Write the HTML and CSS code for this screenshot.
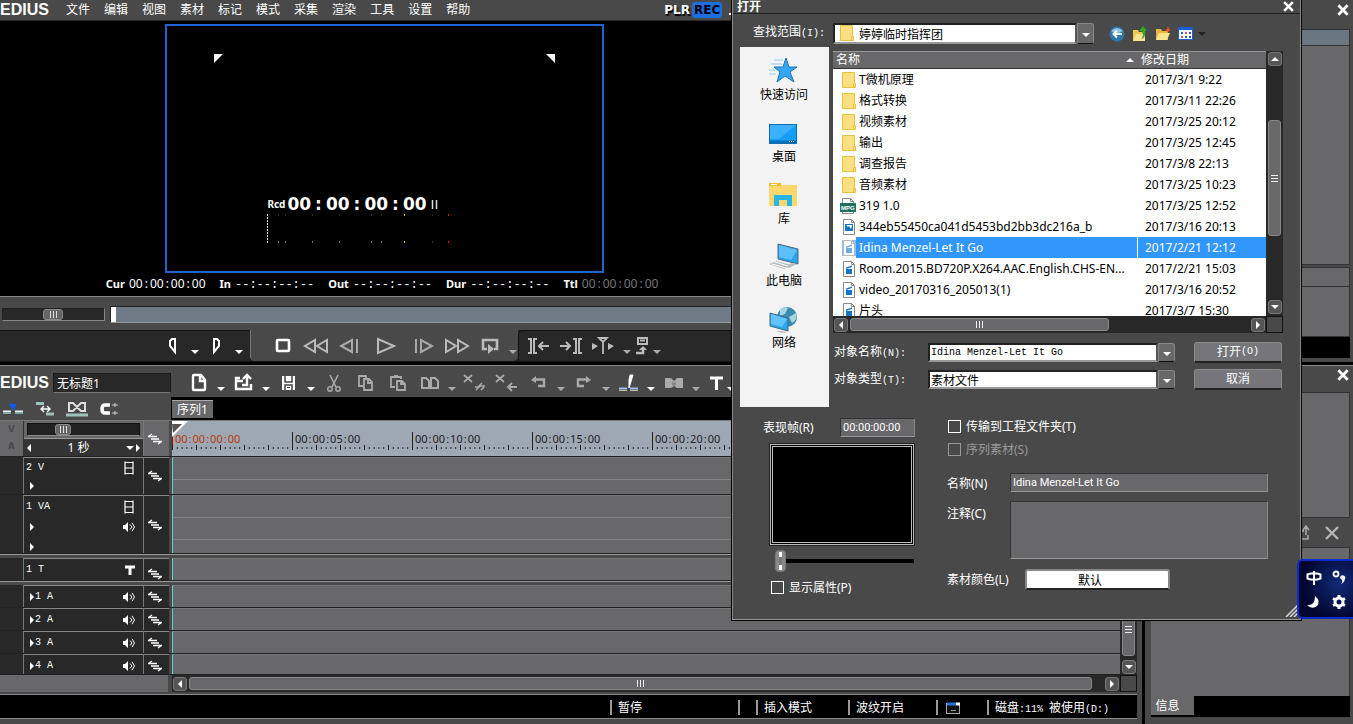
FILE: index.html
```html
<!DOCTYPE html>
<html lang="zh-CN">

<head>
    <meta charset="UTF-8">
    <meta name="viewport" content="width=device-width, initial-scale=1.0">
    <link rel="stylesheet" href="styles.css">
    <title>EDIUS</title>
</head>

<body>
    <!-- Shared icons -->
    <svg class="defs" aria-hidden="true">
        <symbol id="down" viewBox="0 0 10 6"><path d="M1 1h8L5 5z" fill="currentColor"/></symbol>
        <symbol id="right" viewBox="0 0 6 10"><path d="M1 1v8l4-4z" fill="currentColor"/></symbol>
        <symbol id="left" viewBox="0 0 6 10"><path d="M5 1v8L1 5z" fill="currentColor"/></symbol>
        <symbol id="up" viewBox="0 0 10 6"><path d="M1 5h8L5 1z" fill="currentColor"/></symbol>
        <symbol id="close" viewBox="0 0 12 12"><path d="M2 2l8 8M10 2l-8 8" stroke="currentColor" stroke-width="2.4"/></symbol>
        <symbol id="sync" viewBox="0 0 14 12"><path d="M0 3.500h9M3 6h8M5 8.500h9M4 1L.5 3.500M10 11l3.500-2.500" stroke="currentColor" fill="none" stroke-width="1.300"/></symbol>
        <symbol id="film" viewBox="0 0 12 14"><path d="M2 .5v13M10 .5v13M2 1.500h8M2 7h8M2 12.500h8" stroke="currentColor" stroke-width="1.200" fill="none"/></symbol>
        <symbol id="speaker" viewBox="0 0 12 10"><path d="M0 3h2l3-3v10L2 7H0z" fill="currentColor"/><path d="M7 2.500L9 5 7 7.500M9 .8L11.500 5 9 9.200" stroke="currentColor" fill="none"/></symbol>
        <symbol id="folder" viewBox="0 0 14 16"><path d="M.5.5h12v11h1v4H.5z" fill="#fbdf81" stroke="#e9c13c"/><path d="M11.500 11.500v4" stroke="#e9c13c"/></symbol>
        <symbol id="film-file" viewBox="0 0 14 16"><path d="M1.500.5h8l3 3v12h-11z" fill="#fff" stroke="#8a8a8a"/><path d="M9.500.5v3h3" fill="none" stroke="#8a8a8a"/><path d="M4 8h6v5H4zM4 6.500l6-2v1.500L4 8z" fill="#1474c9"/></symbol>
        <symbol id="image-file" viewBox="0 0 14 16"><path d="M1.500.5h8l3 3v12h-11z" fill="#fff" stroke="#8a8a8a"/><path d="M9.500.5v3h3" fill="none" stroke="#8a8a8a"/><path d="M3 5h8v7H3z" fill="#1474c9"/><path d="M4 6l2 2 1-1 2 3 1-3v-1H4z" fill="#fff"/></symbol>
    </svg>

    <div class="top-row">
        <!-- Player -->
        <div class="player">
            <div class="menubar">
                <span class="logo">EDIUS</span>
                <nav class="menu">
                    <a href="#">文件</a><a href="#">编辑</a><a href="#">视图</a><a href="#">素材</a><a href="#">标记</a><a href="#">模式</a><a href="#">采集</a><a href="#">渲染</a><a href="#">工具</a><a href="#">设置</a><a href="#">帮助</a>
                </nav>
                <div class="mode"><span class="plr">PLR</span><span class="rec">REC</span></div>
                <span class="minimize"></span>
            </div>
            <div class="monitor-area">
                <div class="monitor">
                    <div class="corners">
                        <svg width="9" height="9"><path d="M0 0h9L0 9z" fill="#fff"/></svg>
                        <svg width="9" height="9"><path d="M0 0h9v9z" fill="#fff"/></svg>
                    </div>
                    <div class="recording">
                        <div class="rec-line"><span class="rcd">Rcd</span><span class="big-tc">00<i>:</i>00<i>:</i>00<i>:</i>00</span><svg width="8" height="9"><path d="M1.500 0v9M5.500 0v9" stroke="#ddd" stroke-width="1.500"/></svg></div>
                        <svg class="levels" width="190" height="30">
                            <path d="M.5 0v29" stroke="#d8ecdd" stroke-dasharray="2 1"/>
                            <path d="M11 1h1M18 1h1M45 1h1M72 1h1M104 1h1M114 1h1" stroke="#555"/>
                            <path d="M11 28h1M18 28h1M45 28h1M72 28h1M104 28h1M114 28h1" stroke="#cfe8d6"/>
                            <path d="M137 1h1M137 28h1" stroke="#cc0" stroke-width="2"/>
                            <path d="M165 1h1M165 28h1" stroke="#7a5b20"/>
                            <path d="M181 1h1M181 28h1" stroke="#f00" stroke-width="2"/>
                        </svg>
                    </div>
                </div>
                <div class="timecodes">
                    <span><b>Cur</b><span class="tc">00<i>:</i>00<i>:</i>00<i>:</i>00</span></span>
                    <span><b>In</b><span class="dashes">--:--:--:--</span></span>
                    <span><b>Out</b><span class="dashes">--:--:--:--</span></span>
                    <span><b>Dur</b><span class="dashes">--:--:--:--</span></span>
                    <span class="total"><b>Ttl</b><span class="tc">00<i>:</i>00<i>:</i>00<i>:</i>00</span></span>
                </div>
            </div>
            <div class="seek">
                <div class="shuttle"><span class="grip"></span></div>
                <div class="position"><span class="cursor"></span></div>
            </div>
            <div class="transport">
                <div class="marks">
                    <button aria-label="设置入点"><svg width="12" height="20"><path d="M8 3v13L3 10V5l2-2z" fill="none" stroke="#fff" stroke-width="2"/></svg></button>
                    <button class="drop" aria-label="入点菜单"><svg><use href="#down"/></svg></button>
                    <button aria-label="设置出点"><svg width="12" height="20"><path d="M3 3v13l5-6V5L6 3z" fill="none" stroke="#fff" stroke-width="2"/></svg></button>
                    <button class="drop" aria-label="出点菜单"><svg><use href="#down"/></svg></button>
                </div>
                <div class="play-buttons">
                    <button aria-label="停止"><svg width="16" height="16"><rect x="2" y="2" width="12" height="11" rx="1" fill="none" stroke="#fff" stroke-width="2.600"/></svg></button>
                    <button aria-label="快退"><svg width="26" height="16"><path d="M12 2v12L2 8zM24 2v12L14 8z" fill="none" stroke="#bbb" stroke-width="2"/></svg></button>
                    <button aria-label="上一帧"><svg width="20" height="16"><path d="M13 2v12L2 8zM18 1v14" fill="none" stroke="#aaa" stroke-width="2"/></svg></button>
                    <button class="play" aria-label="播放"><svg width="22" height="18"><path d="M3 2v14l16-7z" fill="none" stroke="#bbb" stroke-width="2"/></svg></button>
                    <button aria-label="下一帧"><svg width="20" height="16"><path d="M7 2v12l11-6zM2 1v14" fill="none" stroke="#aaa" stroke-width="2"/></svg></button>
                    <button aria-label="快进"><svg width="26" height="16"><path d="M2 2v12l10-6zM14 2v12l10-6z" fill="none" stroke="#bbb" stroke-width="2"/></svg></button>
                    <button aria-label="循环"><svg width="20" height="18"><path d="M7 12H3V3h14v9h-3" fill="none" stroke="#bbb" stroke-width="2.600"/><path d="M8 7v10l6-5z" fill="#bbb"/></svg></button>
                    <button class="drop dim" aria-label="循环菜单"><svg><use href="#down"/></svg></button>
                </div>
                <div class="edit-buttons">
                    <button aria-label="转到入点"><svg width="24" height="18"><path d="M1 2h3v14H1M10 2H7v14h3M22 9h-9M16 5l-4 4 4 4" fill="none" stroke="#bbb" stroke-width="2"/></svg></button>
                    <button aria-label="转到出点"><svg width="24" height="18"><path d="M14 2h3v14h-3M23 2h-3v14h3M1 9h9M7 5l4 4-4 4" fill="none" stroke="#bbb" stroke-width="2"/></svg></button>
                    <button aria-label="播放剪辑点"><svg width="24" height="18"><path d="M1 6v7l6-4zM17 6v7l6-4z" fill="#bbb"/><path d="M12 17V5M8 1l4 4 4-4z" fill="none" stroke="#bbb" stroke-width="1.800"/></svg></button>
                    <button class="drop dim" aria-label="剪辑点菜单"><svg><use href="#down"/></svg></button>
                    <button class="narrow" aria-label="输出"><svg width="14" height="20"><path d="M3 2h9v6H3zM5 4.500h5" fill="none" stroke="#bbb" stroke-width="2"/><path d="M1 17h7v-5" fill="none" stroke="#bbb" stroke-width="2.500"/><path d="M4 14l4-4 4 4z" fill="#bbb"/></svg></button>
                    <button class="drop dim narrow" aria-label="输出菜单"><svg><use href="#down"/></svg></button>
                </div>
            </div>
        </div>

        <!-- Bin window -->
        <div class="bin">
            <div class="bin-title"><button aria-label="关闭素材库"><svg width="14" height="14"><use href="#close"/></svg></button></div>
            <div class="bin-bar"></div>
            <div class="bin-list"></div>
            <div class="bin-detail"></div>
            <div class="bin-footer"></div>
        </div>
    </div>

    <div class="bottom-row">
        <!-- Timeline window -->
        <div class="timeline">
            <div class="toolbar">
                <span class="logo">EDIUS</span>
                <input class="project-name" type="text" value="无标题1" aria-label="工程名称">
                <div class="tools">
                    <button aria-label="新建"><svg width="18" height="20"><path d="M4 2h7l4 5v9q0 1-1 1H4q-1 0-1-1V3q0-1 1-1zM10 3v5h5" fill="none" stroke="#fff" stroke-width="2.400"/></svg></button>
                    <button class="drop" aria-label="新建菜单"><svg><use href="#down"/></svg></button>
                    <button aria-label="打开工程"><svg width="20" height="20"><path d="M9 8H2v8h15v-5M2 8V5h4M8 12h5V4M9 6l4-4 4 4" fill="none" stroke="#fff" stroke-width="2.400"/></svg></button>
                    <button class="drop" aria-label="打开菜单"><svg><use href="#down"/></svg></button>
                    <button aria-label="保存"><svg width="16" height="18"><path d="M1 2h13v14H1z" fill="#fff"/><path d="M4 2v6h7V2M4 16v-5h7v5" fill="none" stroke="#444" stroke-width="1.500"/><path d="M6 13.500h3" stroke="#444"/></svg></button>
                    <button class="drop" aria-label="保存菜单"><svg><use href="#down"/></svg></button>
                    <button class="spaced" aria-label="剪切"><svg width="16" height="20"><path d="M4 2l6 12M12 2L6 14" stroke="#aaa" stroke-width="1.600"/><circle cx="4" cy="16" r="2.200" fill="none" stroke="#aaa" stroke-width="1.500"/><circle cx="12" cy="16" r="2.200" fill="none" stroke="#aaa" stroke-width="1.500"/></svg></button>
                    <button class="spaced" aria-label="复制"><svg width="18" height="20"><path d="M6 13H2V3h7v3M7 6h5l3 3v8H7zM11 6v4h4" fill="none" stroke="#aaa" stroke-width="1.800"/></svg></button>
                    <button class="spaced" aria-label="粘贴"><svg width="18" height="20"><path d="M6 14H2V4h10v2M5 3h4M8 8h5l3 3v6H8zM12 8v3h3" fill="none" stroke="#aaa" stroke-width="1.800"/></svg></button>
                    <button aria-label="替换"><svg width="20" height="16"><path d="M2 3h4l3 3v7H2zM11 3h4l3 3v7h-7z" fill="none" stroke="#aaa" stroke-width="2"/></svg></button>
                    <button class="drop dim" aria-label="替换菜单"><svg><use href="#down"/></svg></button>
                    <button class="spaced" aria-label="删除参数"><svg width="23" height="20"><path d="M1 2l8 7M9 2L1 9M13 17l4-4h5M12 14h3l4-4M18 17l3-3" fill="none" stroke="#aaa" stroke-width="1.700"/></svg></button>
                    <button class="spaced" aria-label="波纹删除"><svg width="23" height="20"><path d="M1 2l8 7M9 2L1 9M22 14h-8M17 10l-4 4 4 4" fill="none" stroke="#aaa" stroke-width="1.800"/></svg></button>
                    <button aria-label="撤销"><svg width="18" height="16"><path d="M6 1v7L1 5z" fill="#aaa"/><path d="M4 4.500h10V11H8" fill="none" stroke="#aaa" stroke-width="2.400"/></svg></button>
                    <button class="drop dim" aria-label="撤销菜单"><svg><use href="#down"/></svg></button>
                    <button aria-label="恢复"><svg width="18" height="16"><path d="M11 1v7l5-3z" fill="#aaa"/><path d="M13 4.500H3V11h6" fill="none" stroke="#aaa" stroke-width="2.400"/></svg></button>
                    <button class="drop dim" aria-label="恢复菜单"><svg><use href="#down"/></svg></button>
                    <button aria-label="添加剪切点"><svg width="20" height="18"><path d="M14 1l-4 13V6l1-5z" fill="#fff" stroke="#fff"/><path d="M0 14.500h8M11 14.500h8" stroke="#9cc3ee" stroke-width="2"/><path d="M0 16.500h8M11 16.500h8" stroke="#c9b99c"/></svg></button>
                    <button class="drop" aria-label="剪切点菜单"><svg><use href="#down"/></svg></button>
                    <button aria-label="添加转场"><svg width="20" height="14"><path d="M1 2h6l3 3 3-3h6v10h-6l-3-2-3 2H1z" fill="#aaa"/><path d="M8 5v4l2 1 2-1V5l-2 2z" fill="#888"/></svg></button>
                    <button class="drop dim" aria-label="转场菜单"><svg><use href="#down"/></svg></button>
                    <button class="text-tool" aria-label="创建字幕"><svg width="16" height="16"><path d="M1 3h13M7.500 3v12" stroke="#fff" stroke-width="3"/></svg></button>
                    <button class="drop" aria-label="字幕菜单"><svg><use href="#down"/></svg></button>
                </div>
            </div>

            <div class="tabs-row">
                <div class="toggles">
                    <button aria-label="插入模式"><svg width="20" height="14"><path d="M0 10h8M12 10h8" stroke="#eee" stroke-width="3"/><path d="M0 11h8M12 11h8" stroke="#7fa6a8" stroke-width="2"/><path d="M6 2h8l-4 7z" fill="#0a5cf5"/></svg></button>
                    <button aria-label="波纹模式"><svg width="18" height="14"><path d="M0 1.500h8M10 12h8" stroke="#9fc0bb" stroke-width="3"/><path d="M5 7h9M8 4L5 7l3 3M11 4l3 3-3 3" fill="none" stroke="#fff" stroke-width="1.400"/></svg></button>
                    <button aria-label="组模式"><svg width="22" height="16"><path d="M3 2h4l8 8h4V2h-4L7 10H3z" fill="none" stroke="#ddd" stroke-width="2"/><path d="M0 14h22" stroke="#9fc0bb" stroke-width="3"/></svg></button>
                    <button aria-label="吸附"><svg width="19" height="14"><path d="M10 3H5Q2 3 2 7t3 4h5" fill="none" stroke="#fff" stroke-width="3.500"/><path d="M12 3h6M12 11h6M15 1v4M15 9v4" stroke="#ccc"/></svg></button>
                </div>
                <div class="tabs"><button class="tab">序列1</button></div>
            </div>

            <div class="scale-row">
                <div class="va"><span>V</span><span>A</span></div>
                <div class="scale">
                    <div class="scale-slider"><span class="grip"></span></div>
                    <div class="scale-value"><svg width="6" height="10"><use href="#left"/></svg><span>1 秒</span><svg width="10" height="6"><use href="#down"/></svg><svg width="6" height="10"><use href="#right"/></svg></div>
                </div>
                <div class="sync-all"><svg width="14" height="12"><use href="#sync"/></svg></div>
                <div class="ruler">
                    <svg class="playhead" width="16" height="16"><path d="M0 0h16L0 16z" fill="#fff"/><path d="M0 3h10L1 12z" fill="#555"/></svg>
                    <div class="marks-row">
                        <span class="tc now">00<i>:</i>00<i>:</i>00<i>:</i>00</span>
                        <span class="tc">00<i>:</i>00<i>:</i>05<i>:</i>00</span>
                        <span class="tc">00<i>:</i>00<i>:</i>10<i>:</i>00</span>
                        <span class="tc">00<i>:</i>00<i>:</i>15<i>:</i>00</span>
                        <span class="tc">00<i>:</i>00<i>:</i>20<i>:</i>00</span>
                    </div>
                    <svg class="ticks" width="100%" height="5">
                        <defs><pattern id="tick" width="24" height="5" patternUnits="userSpaceOnUse"><path d="M.5 0v5M5.300 2v2M10.100 2v2M14.900 2v2M19.700 2v2" stroke="#222"/></pattern></defs>
                        <rect width="100%" height="5" fill="url(#tick)"/>
                    </svg>
                </div>
            </div>

            <div class="tracks-area">
                <div class="tracks">
                    <div class="track video">
                        <div class="patch"></div>
                        <div class="head"><div class="head-line"><span>2 V</span><svg width="12" height="14"><use href="#film"/></svg></div><div class="head-line"><svg width="6" height="10"><use href="#right"/></svg></div></div>
                        <div class="sync"><svg width="14" height="12"><use href="#sync"/></svg></div>
                        <div class="lane"><div class="sub"></div><div class="sub small"></div></div>
                    </div>
                    <div class="track video-audio">
                        <div class="patch"></div>
                        <div class="head"><div class="head-line"><span>1 VA</span><svg width="12" height="14"><use href="#film"/></svg></div><div class="head-line"><svg width="6" height="10"><use href="#right"/></svg><svg width="12" height="10"><use href="#speaker"/></svg></div><div class="head-line"><svg width="6" height="10"><use href="#right"/></svg></div></div>
                        <div class="sync"><svg width="14" height="12"><use href="#sync"/></svg></div>
                        <div class="lane"><div class="sub"></div><div class="sub"></div><div class="sub small"></div></div>
                    </div>
                    <div class="split"></div>
                    <div class="track title">
                        <div class="patch"></div>
                        <div class="head"><div class="head-line"><span>1 T</span><svg width="10" height="10"><path d="M0 2h10M5 2v8" stroke="#fff" stroke-width="3"/></svg></div></div>
                        <div class="sync"><svg width="14" height="12"><use href="#sync"/></svg></div>
                        <div class="lane"></div>
                    </div>
                    <div class="split"></div>
                    <div class="track audio">
                        <div class="patch"></div>
                        <div class="head"><div class="head-line"><svg width="6" height="10"><use href="#right"/></svg><span>1 A</span><svg width="12" height="10"><use href="#speaker"/></svg></div></div>
                        <div class="sync"><svg width="14" height="12"><use href="#sync"/></svg></div>
                        <div class="lane"></div>
                    </div>
                    <div class="track audio">
                        <div class="patch"></div>
                        <div class="head"><div class="head-line"><svg width="6" height="10"><use href="#right"/></svg><span>2 A</span><svg width="12" height="10"><use href="#speaker"/></svg></div></div>
                        <div class="sync"><svg width="14" height="12"><use href="#sync"/></svg></div>
                        <div class="lane"></div>
                    </div>
                    <div class="track audio">
                        <div class="patch"></div>
                        <div class="head"><div class="head-line"><svg width="6" height="10"><use href="#right"/></svg><span>3 A</span><svg width="12" height="10"><use href="#speaker"/></svg></div></div>
                        <div class="sync"><svg width="14" height="12"><use href="#sync"/></svg></div>
                        <div class="lane"></div>
                    </div>
                    <div class="track audio">
                        <div class="patch"></div>
                        <div class="head"><div class="head-line"><svg width="6" height="10"><use href="#right"/></svg><span>4 A</span><svg width="12" height="10"><use href="#speaker"/></svg></div></div>
                        <div class="sync"><svg width="14" height="12"><use href="#sync"/></svg></div>
                        <div class="lane"></div>
                    </div>
                </div>
                <div class="vscroll">
                    <div class="thumb"><span class="lines"></span></div>
                    <button aria-label="向下滚动"><svg width="10" height="6"><use href="#down"/></svg></button>
                </div>
            </div>

            <div class="hscroll-row">
                <div class="hscroll">
                    <button aria-label="向左滚动"><svg width="6" height="10"><use href="#left"/></svg></button>
                    <div class="thumb"><span class="bars"></span></div>
                    <button aria-label="向右滚动"><svg width="6" height="10"><use href="#right"/></svg></button>
                </div>
                <div class="scroll-corner"></div>
            </div>

            <div class="statusbar">
                <div class="st-state">暂停</div>
                <div class="st-empty"></div>
                <div class="st-mode">插入模式</div>
                <div class="st-ripple">波纹开启</div>
                <div class="st-icon"><svg width="15" height="12"><rect x=".5" y="1.500" width="13" height="10" fill="#111" stroke="#aaa"/><path d="M1 2h9" stroke="#2272e6" stroke-width="3"/><path d="M10 2h4" stroke="#fff" stroke-width="3"/><path d="M5 8.500h5" stroke="#999"/></svg></div>
                <div class="st-disk">磁盘<span class="mono">:11% </span>被使用<span class="mono">(D:)</span></div>
            </div>
        </div>

        <!-- Information palette -->
        <div class="info">
            <div class="info-title"><button aria-label="关闭信息"><svg width="14" height="14"><use href="#close"/></svg></button></div>
            <div class="info-top"></div>
            <div class="info-tools">
                <svg width="12" height="16"><path d="M5 6H1v8h8v-4M7 10V2M4 5l3-4 3 4" fill="none" stroke="#aaa" stroke-width="1.500"/></svg>
                <button aria-label="删除"><svg width="16" height="16"><path d="M2 2l12 12M14 2L2 14" stroke="#b5b5b5" stroke-width="2.400"/></svg></button>
            </div>
            <div class="info-body"></div>
            <div class="info-tabs"><button>信息</button></div>
        </div>
    </div>

    <!-- Open file dialog -->
    <div class="dialog" role="dialog" aria-label="打开">
        <div class="dialog-title"><b>打开</b><button aria-label="关闭"><svg width="13" height="13"><use href="#close"/></svg></button></div>

        <div class="lookin">
            <label for="lookin">查找范围<span class="mono">(I):</span></label>
            <div class="combo">
                <div class="combo-field"><svg width="14" height="16"><use href="#folder"/></svg><select id="lookin"><option>婷婷临时指挥团</option></select></div>
                <span class="combo-arrow"><svg width="10" height="6"><use href="#down"/></svg></span>
            </div>
            <div class="nav-icons">
                <button aria-label="后退"><svg width="16" height="16"><circle cx="8" cy="8" r="7.500" fill="#2c77ae"/><path d="M2 5q6-6 12 0-6 4-12 0z" fill="#8ec4e4"/><path d="M13 8H5M8 4.500L4.500 8 8 11.500" fill="none" stroke="#fff" stroke-width="2"/></svg></button>
                <button aria-label="上一级"><svg width="16" height="16"><path d="M1 4h5l1 2h6v9H1z" fill="#f0ca54"/><path d="M1 15l3-7h9v7z" fill="#fbe490"/><path d="M9 13q3-2 1-8H7l4-5 4 5h-2q1 7-4 8z" fill="#3ba822"/></svg></button>
                <button aria-label="新建文件夹"><svg width="16" height="16"><path d="M1 3h5l1 2h6v9H1z" fill="#e8b83d"/><path d="M1 14l3-7h11l-3 7z" fill="#fce391"/><path d="M13 0l1 3 2 1-2 1-1 2-1-2-2-1 2-1z" fill="#f4501c"/></svg></button>
                <button aria-label="查看"><svg width="16" height="16"><rect x=".5" y="1.500" width="14" height="12" fill="#fff" stroke="#1560d4"/><path d="M0 2.500h15" stroke="#1560d4" stroke-width="3"/><path d="M3 6h2v2H3zM7 10h2v2H7z" fill="#1560d4"/><path d="M7 6h2v2H7zM3 10h2v2H3z" fill="#c2576b"/><path d="M11 6h2v2h-2zM11 10h2v2h-2z" fill="#31549c"/></svg></button>
                <svg class="view-arrow" width="10" height="6"><use href="#down"/></svg>
            </div>
        </div>

        <div class="browser">
            <div class="places">
                <a href="#"><svg width="32" height="28"><path d="M18 1l3 9h8l-7 5 4 10-9-6-8 6 3-10-6-5h9z" fill="#35a6f3" stroke="#1778b8"/><path d="M6 3h9M3 7h11M1 13h6M1 17h7" stroke="#94cdf3"/></svg>快速访问</a>
                <a href="#"><svg width="32" height="28"><rect x="1.500" y="5.500" width="27" height="19" fill="#169df8" stroke="#0c70b6"/><path d="M2 23h26" stroke="#0c70b6" stroke-width="3"/><path d="M21 22.500h6" stroke="#fff" stroke-dasharray="1 1"/><path d="M2 6h26L11 20H2z" fill="#3dafff"/></svg>桌面</a>
                <a href="#"><svg width="32" height="28"><path d="M1 2h12v2h16v21H1z" fill="#fbd86d"/><path d="M1 2h12v3H1z" fill="#eebc2e"/><path d="M3 3h6v1H3z" fill="#fff"/><path d="M6 25V14h18v11h-5v-6h-8v6z" fill="#28b6e8"/></svg>库</a>
                <a href="#"><svg width="34" height="30"><path d="M11 1l20 5v15l-20-5z" fill="#27a3f0" stroke="#4d6b78"/><path d="M12 2l18 5-6 10-12-3z" fill="#5dc0fb"/><path d="M25 20l5 1-8 4-4-2zM2 21l8-3 14 4-7 4z" fill="#b6bec3"/><path d="M5 21l14 4M8 19l13 4" stroke="#fff"/></svg>此电脑</a>
                <a href="#"><svg width="34" height="30"><circle cx="20" cy="12" r="10" fill="#388bb1"/><path d="M13 5q5-4 8-2l-3 6-5 2zM22 12l7-4q2 7-4 10z" fill="#a8d7df"/><path d="M3 8l18 5v13L3 21z" fill="#29a6f1" stroke="#486a7c"/><path d="M4 9l16 5-5 8-11-3z" fill="#61c4ff"/><path d="M9 26h5l6 1-5 1z" fill="#b6bec3"/></svg>网络</a>
            </div>

            <div class="file-list">
                <div class="file-main">
                    <div class="file-scroll">
                        <table>
                            <thead>
                                <tr><th class="name-col"><div class="th-inner">名称<svg width="10" height="6"><use href="#up"/></svg></div></th><th>修改日期</th></tr>
                            </thead>
                            <tbody>
                                <tr><td><div class="file"><svg width="14" height="16"><use href="#folder"/></svg><span>T微机原理</span></div></td><td>2017/3/1 9:22</td></tr>
                                <tr><td><div class="file"><svg width="14" height="16"><use href="#folder"/></svg><span>格式转换</span></div></td><td>2017/3/11 22:26</td></tr>
                                <tr><td><div class="file"><svg width="14" height="16"><use href="#folder"/></svg><span>视频素材</span></div></td><td>2017/3/25 20:12</td></tr>
                                <tr><td><div class="file"><svg width="14" height="16"><use href="#folder"/></svg><span>输出</span></div></td><td>2017/3/25 12:45</td></tr>
                                <tr><td><div class="file"><svg width="14" height="16"><use href="#folder"/></svg><span>调查报告</span></div></td><td>2017/3/8 22:13</td></tr>
                                <tr><td><div class="file"><svg width="14" height="16"><use href="#folder"/></svg><span>音频素材</span></div></td><td>2017/3/25 10:23</td></tr>
                                <tr><td><div class="file"><svg class="mpg" width="16" height="16"><path d="M2.500 6V.5h8l3 3V15.500h-11V12" fill="#fff" stroke="#8a8a8a"/><path d="M10.500.5v3h3" fill="none" stroke="#8a8a8a"/><path d="M0 5h16v9H0z" fill="#1d7264"/><text x="1" y="12">MPG</text></svg><span>319 1.0</span></div></td><td>2017/3/25 12:52</td></tr>
                                <tr><td><div class="file"><svg width="14" height="16"><use href="#image-file"/></svg><span>344eb55450ca041d5453bd2bb3dc216a_b</span></div></td><td>2017/3/16 20:13</td></tr>
                                <tr class="selected"><td><div class="file"><svg width="14" height="16"><use href="#film-file"/></svg><span>Idina Menzel-Let It Go</span></div></td><td>2017/2/21 12:12</td></tr>
                                <tr><td><div class="file"><svg width="14" height="16"><use href="#film-file"/></svg><span>Room.2015.BD720P.X264.AAC.English.CHS-EN...</span></div></td><td>2017/2/21 15:03</td></tr>
                                <tr><td><div class="file"><svg width="14" height="16"><use href="#film-file"/></svg><span>video_20170316_205013(1)</span></div></td><td>2017/3/16 20:52</td></tr>
                                <tr><td><div class="file"><svg width="14" height="16"><use href="#film-file"/></svg><span>片头</span></div></td><td>2017/3/7 15:30</td></tr>
                            </tbody>
                        </table>
                    </div>
                    <div class="vscroll">
                        <button aria-label="向上"><svg width="10" height="6"><use href="#up"/></svg></button>
                        <div class="thumb"><span class="lines"></span></div>
                        <button aria-label="向下"><svg width="10" height="6"><use href="#down"/></svg></button>
                    </div>
                </div>
                <div class="hscroll-row">
                    <div class="hscroll">
                        <button aria-label="向左"><svg width="6" height="10"><use href="#left"/></svg></button>
                        <div class="thumb"><span class="bars"></span></div>
                        <button aria-label="向右"><svg width="6" height="10"><use href="#right"/></svg></button>
                    </div>
                    <div class="scroll-corner"></div>
                </div>

                <div class="name-rows">
                    <div class="name-row">
                        <label for="objname">对象名称<span class="mono">(N):</span></label>
                        <div class="combo"><div class="combo-field"><input id="objname" type="text" value="Idina Menzel-Let It Go"></div><span class="combo-arrow"><svg width="10" height="6"><use href="#down"/></svg></span></div>
                        <button class="btn">打开<span class="mono">(O)</span></button>
                    </div>
                    <div class="name-row">
                        <label for="objtype">对象类型<span class="mono">(T):</span></label>
                        <div class="combo"><div class="combo-field"><select id="objtype"><option>素材文件</option></select></div><span class="combo-arrow"><svg width="10" height="6"><use href="#down"/></svg></span></div>
                        <button class="btn">取消</button>
                    </div>
                </div>
            </div>
        </div>

        <div class="properties">
            <div class="preview-col">
                <div class="frame-row"><label for="frame">表现帧(R)</label><input id="frame" class="field" type="text" value="00:00:00:00"></div>
                <div class="preview"></div>
                <input class="frame-slider" type="range" min="0" max="100" value="0" aria-label="表现帧位置">
                <label class="check"><input type="checkbox">显示属性(P)</label>
            </div>
            <div class="clip-col">
                <label class="check"><input type="checkbox">传输到工程文件夹(T)</label>
                <label class="check disabled"><input type="checkbox" disabled>序列素材(S)</label>
                <div class="form-row first"><label for="clipname">名称(N)</label><input id="clipname" class="field" type="text" value="Idina Menzel-Let It Go"></div>
                <div class="form-row comment"><label for="comment">注释(C)</label><textarea id="comment" class="field"></textarea></div>
                <div class="form-row color"><label for="color">素材颜色(L)</label><button id="color" class="color-btn">默认</button></div>
            </div>
        </div>
        <svg class="resize" width="13" height="13"><path d="M1 13L13 1M5 13l8-8M9 13l4-4" stroke="#ddd" stroke-width="1.500"/></svg>
    </div>

    <!-- Input method panel -->
    <div class="ime">
        <svg width="18" height="18"><path d="M2.500 5.500Q9 3 15.500 5.500v4Q9 12 2.500 9.500zM9 2v14" fill="none" stroke="#fff" stroke-width="2"/></svg>
        <svg width="16" height="18"><circle cx="5" cy="5" r="2.500" fill="none" stroke="#fff" stroke-width="1.800"/><path d="M9 8a2.500 2.500 0 1 1 5 2q-1 4-4 5 2-3 1-4-2-1-2-3z" fill="#fff"/></svg>
        <svg width="16" height="16"><path d="M10 2q6 5 2 10-5 4-10-1 8 1 8-9z" fill="#fff"/></svg>
        <svg width="16" height="16"><circle cx="8" cy="8" r="4" fill="none" stroke="#fff" stroke-width="3"/><path d="M8 1v2M8 13v2M2 4.500l2 1M12 10.500l2 1M2 11.500l2-1M12 5.500l2-1" stroke="#fff" stroke-width="3"/></svg>
    </div>
</body>

</html>
```
FILE: styles.css
```css
/* Reset and global styles */
* {
    box-sizing: border-box;
}

body {
    margin: 0;
    height: 100vh;
    min-height: 700px;
    display: flex;
    flex-direction: column;
    overflow: hidden;
    position: relative;
    background-color: #000;
    color: #fff;
    font-family: "Noto Sans", "Noto Sans CJK SC", sans-serif;
    font-size: 12px;
    line-height: 16px;
}

button {
    border: 0;
    padding: 0;
    margin: 0;
    background: none;
    color: inherit;
    font: inherit;
    display: flex;
    align-items: center;
    justify-content: center;
    flex-shrink: 0;
}

a {
    color: inherit;
    text-decoration: none;
}

svg {
    flex-shrink: 0;
    display: block;
}

.defs {
    position: absolute;
    width: 0;
    height: 0;
}

.tc i {
    font-style: normal;
    margin: 0 2px;
}

.mono {
    font-family: "Liberation Mono", monospace;
    font-size: 10px;
    white-space: pre;
}

.top-row {
    display: flex;
    flex: 0 0 362px;
}

.bottom-row {
    display: flex;
    flex: 1;
    min-height: 0;
    margin-top: 3px;
    gap: 3px;
}

.logo {
    width: 51px;
    font: bold 16px/16px "Liberation Sans", sans-serif;
    flex-shrink: 0;
}

/* Player */
.player {
    flex: 0 0 57%;
    display: flex;
    flex-direction: column;
    background-color: #494949;
}

.menubar {
    height: 21px;
    display: flex;
    align-items: center;
    border-bottom: 1px solid #2a2a2a;
}

.menu {
    display: flex;
    gap: 14px;
    margin-left: 15px;
    flex: 1;
    white-space: nowrap;
}

.mode {
    display: flex;
    align-items: center;
    gap: 2px;
    font: bold 12px/16px "DejaVu Sans", sans-serif;
}

.plr {
    text-shadow: 1px 2px 1px #000;
}

.rec {
    background-color: #1b6fdf;
    color: #001;
    border-radius: 3px;
    padding: 0 2px;
}

.minimize {
    width: 10px;
    height: 2px;
    background-color: #fff;
    margin: 8px 32px 0 7px;
}

.monitor-area {
    flex: 1;
    background-color: #000;
    padding: 3px 2px 0 0;
}

.monitor {
    width: 57%;
    height: 249px;
    margin: 0 auto;
    border: 2px solid #1d64d2;
    display: flex;
    flex-direction: column;
}

.corners {
    display: flex;
    justify-content: space-between;
    padding: 28px 47px 0;
}

.recording {
    margin: 131px 0 0 100px;
}

.rec-line {
    display: flex;
    align-items: center;
    height: 20px;
}

.rcd {
    font: bold 10px/16px "Noto Sans", sans-serif;
    margin-right: 2px;
}

.big-tc {
    font: bold 17px/20px "DejaVu Sans", sans-serif;
    margin-right: 4px;
}

.big-tc i {
    font-style: normal;
    margin: 0 4px;
}

.timecodes {
    display: flex;
    justify-content: center;
    gap: 14px;
    padding: 3px 5px 0 0;
}

.timecodes b {
    font-size: 11px;
    margin-right: 4px;
}

.dashes {
    font-family: "Liberation Mono", monospace;
}

.total .tc {
    color: #777;
}

.seek {
    height: 34px;
    border-top: 1px solid #888;
    display: flex;
    align-items: center;
    gap: 5px;
    padding: 2px 39px 0 2px;
}

.shuttle {
    width: 103px;
    height: 13px;
    background-color: #282828;
    border: 1px solid #222;
    border-bottom-color: #888;
    border-right-color: #888;
    padding-left: 40px;
}

.grip {
    display: block;
    width: 20px;
    height: 11px;
    border: 1px solid #888;
    border-radius: 3px;
    background: repeating-linear-gradient(90deg, #ddd 0 1px, #666 1px 3px) center / 7px 7px no-repeat #666;
}

.position {
    flex: 1;
    height: 17px;
    background-color: #6f7a86;
    border: 1px solid #222;
    border-bottom-color: #999;
    border-right: 1px solid #fff;
}

.cursor {
    display: block;
    width: 5px;
    height: 15px;
    background-color: #fff;
}

.transport {
    height: 32px;
    display: flex;
    background-color: #282828;
    border-bottom: 1px solid #111;
}

.marks,
.play-buttons,
.edit-buttons {
    display: flex;
    align-items: center;
    height: 31px;
}

.marks {
    width: 250px;
    border-top: 1px solid #111;
    padding-left: 162px;
}

.transport button {
    width: 22px;
    height: 28px;
}

.transport .drop,
.tools .drop {
    padding-top: 12px;
}

.drop svg {
    width: 10px;
    height: 6px;
}

.dim {
    color: #aaa;
}

.play-buttons {
    width: 268px;
    background-color: #494949;
    border-left: 1px solid #777;
    border-radius: 0 0 5px 5px;
    padding-left: 15px;
}

.play-buttons button {
    width: 32px;
}

.transport .play-buttons button {
    width: 33px;
}

.transport .play-buttons .play {
    width: 42px;
}

.transport .play-buttons .drop {
    width: 13px;
}

.edit-buttons {
    flex: 1;
    border-top: 1px solid #111;
    border-left: 1px solid #111;
    border-radius: 5px 0 0 0;
    padding-left: 4px;
}

.transport .edit-buttons button {
    width: 32px;
}

.transport .edit-buttons .drop,
.transport .edit-buttons .narrow {
    width: 15px;
}

/* Bin window */
.bin {
    flex: 1;
    display: flex;
    flex-direction: column;
    padding-right: 3px;
    background-color: #494949;
}

.bin-title {
    height: 29px;
    display: flex;
    justify-content: flex-end;
    align-items: flex-start;
    padding: 3px 0 0;
}

.bin-bar {
    height: 17px;
    background-color: #6b7683;
    border: 1px solid #333;
}

.bin-list {
    height: 219px;
    background-color: #68686a;
    border-right: 1px solid #333;
    border-bottom: 1px solid #333;
}

.bin-detail {
    height: 70px;
    margin-top: 2px;
    background: linear-gradient(#333, #333) 0 18px / 100% 1px no-repeat #68686a;
    border: 1px solid #333;
}

.bin-footer {
    height: 21px;
    background-color: #000;
}

/* Timeline window */
.timeline {
    flex: 1;
    min-width: 0;
    display: flex;
    flex-direction: column;
    background-color: #494949;
    border-top: 1px solid #888;
}

.toolbar {
    height: 31px;
    display: flex;
    align-items: center;
    padding-top: 3px;
    overflow: hidden;
}

.project-name {
    width: 118px;
    height: 20px;
    margin-left: 2px;
    padding: 2px 3px;
    background-color: #282828;
    border: 1px solid #1a1a1a;
    border-bottom-color: #777;
    color: #fff;
    font: inherit;
}

.tools {
    display: flex;
    align-items: center;
    margin-left: 16px;
}

.tools button {
    width: 23px;
    height: 26px;
}

.tools .drop {
    width: 22px;
}

.tools .spaced {
    margin-right: 9px;
}

.tools .text-tool {
    width: 16px;
    margin-left: 2px;
}

.tools .text-tool + .drop {
    width: 12px;
}

.tabs-row {
    height: 24px;
    display: flex;
    border-bottom: 1px solid #777;
}

.toggles {
    width: 171px;
    display: flex;
    gap: 10px;
    padding-left: 2px;
}

.toggles button {
    width: 22px;
}

.tabs {
    flex: 1;
    background-color: #000;
    padding: 3px 0 0 1px;
}

.tab {
    width: 41px;
    height: 18px;
    background-color: #68686a;
    border-top: 1px solid #aaa;
}

.scale-row {
    height: 36px;
    display: flex;
    padding-right: 6px;
    border-bottom: 1px solid #222;
}

.va {
    width: 23px;
    background-color: #68686a;
    display: flex;
    flex-direction: column;
    text-align: center;
    color: #4a4a4a;
    font: bold 9px/17px "DejaVu Sans", sans-serif;
}

.scale {
    width: 120px;
    background-color: #68686a;
    border-left: 1px solid #333;
}

.scale-slider {
    height: 13px;
    margin: 2px 3px;
    background-color: #222;
    border: 1px solid #111;
    border-bottom-color: #888;
    padding-left: 27px;
}

.scale-slider .grip {
    width: 16px;
}

.scale-value {
    height: 18px;
    display: flex;
    align-items: center;
    border-top: 1px solid #999;
    background-color: #333;
    padding: 0 2px;
}

.scale-value span {
    flex: 1;
    text-align: center;
}

.sync-all,
.sync {
    width: 26px;
    display: flex;
    align-items: center;
    justify-content: center;
    border-left: 1px solid #777;
    margin-right: 3px;
    padding-right: 3px;
}

.sync-all {
    background-color: #68686a;
}

.ruler {
    flex: 1;
    background-color: #9ea8b4;
    color: #222;
    display: flex;
    flex-direction: column;
    justify-content: flex-end;
    position: relative;
    overflow: hidden;
}

.playhead {
    position: absolute;
    left: 0;
    top: 0;
}

.marks-row {
    display: flex;
    font-size: 11px;
    line-height: 13px;
}

.marks-row .tc {
    flex: 0 0 120px;
    border-left: 1px solid #222;
    padding-left: 2px;
}

.marks-row i {
    margin: 0 1px;
}

.marks-row .now {
    color: #b63b0c;
    border-left-color: #b00;
}

.ticks {
    margin-bottom: 6px;
}

.tracks-area {
    display: flex;
    padding-right: 5px;
    background-color: #494949;
}

.tracks {
    flex: 1;
    min-width: 0;
}

.track {
    display: flex;
    border-bottom: 1px solid #222;
}

.patch {
    width: 23px;
    background-color: #282828;
}

.head {
    width: 120px;
    background-color: #282828;
    border-left: 1px solid #777;
    border-top: 1px solid #888;
    padding: 1px 8px 0 2px;
    font: 10px/14px "Liberation Mono", monospace;
}

.head-line {
    display: flex;
    align-items: center;
    height: 20px;
}

.head-line > svg:first-child {
    margin-left: 3px;
}

.head-line > svg:last-child:not(:first-child) {
    margin-left: auto;
}

.sync {
    background-color: #282828;
    border-top: 1px solid #888;
}

.lane {
    flex: 1;
    background-color: #68686a;
    border-left: 1px solid #54d9d2;
    border-top: 1px solid #777;
}

.sub {
    height: 22px;
    border-bottom: 1px solid #828284;
}

.sub.small {
    height: 13px;
    border-bottom: 0;
}

.video {
    height: 38px;
}

.video .head-line {
    height: 18px;
}

.video-audio {
    height: 59px;
}

.title {
    height: 23px;
}

.title .sync {
    align-items: flex-end;
}

.audio {
    height: 23px;
}

.audio:last-child {
    height: 21px;
}

.audio:last-child .sync {
    padding-top: 2px;
}

.split {
    height: 4px;
    border-top: 1px solid #999;
    background-color: #494949;
}

/* Scroll bars */
.vscroll {
    width: 17px;
    background-color: #282828;
    display: flex;
    flex-direction: column;
    align-items: center;
    padding: 1px;
}

.vscroll button,
.hscroll button {
    width: 14px;
    height: 14px;
    background-color: #555;
    border: 1px solid #777;
    border-radius: 3px;
}

.vscroll .thumb {
    width: 13px;
    background-color: #68686a;
    border: 1px solid #888;
    border-radius: 3px;
    display: flex;
    align-items: center;
    justify-content: center;
}

.tracks-area .thumb {
    flex: 1;
    margin-bottom: 4px;
    align-items: flex-end;
    padding-bottom: 22px;
}

.lines {
    width: 7px;
    height: 7px;
    background: repeating-linear-gradient(#eee 0 1px, transparent 1px 3px);
}

.bars {
    width: 7px;
    height: 7px;
    background: repeating-linear-gradient(90deg, #eee 0 1px, transparent 1px 3px);
}

.hscroll-row {
    display: flex;
    height: 17px;
}

.hscroll {
    flex: 1;
    display: flex;
    align-items: center;
    background-color: #282828;
    padding: 0 1px;
    gap: 2px;
}

.hscroll .thumb {
    height: 13px;
    flex: 1;
    background-color: #68686a;
    border: 1px solid #888;
    border-radius: 3px;
    display: flex;
    align-items: center;
    justify-content: center;
}

.scroll-corner {
    width: 17px;
    background-color: #494949;
    border: 1px solid #111;
}

.timeline > .hscroll-row {
    padding: 0 5px 0 172px;
    background: linear-gradient(90deg, #68686a 168px, #494949 168px);
}

.timeline .hscroll .thumb {
    margin-right: 11px;
}

.statusbar {
    height: 25px;
    margin: 2px 5px 0 0;
    border-bottom: 1px solid #888;
    border-top: 1px solid #888;
    background-color: #000;
    display: flex;
    align-items: center;
    justify-content: flex-end;
    padding-top: 2px;
    white-space: nowrap;
}

.statusbar div {
    border-left: 2px solid #999;
    padding-left: 6px;
    height: 15px;
    line-height: 15px;
}

.st-state {
    width: 128px;
}

.st-empty {
    width: 18px;
}

.st-mode {
    width: 92px;
}

.st-ripple {
    width: 88px;
}

.st-icon {
    width: 51px;
    display: flex;
    align-items: center;
}

.statusbar .st-icon {
    padding-left: 8px;
}

.st-disk {
    width: 150px;
}

/* Information palette */
.info {
    flex: 0 0 208px;
    background-color: #494949;
    border-top: 1px solid #888;
    display: flex;
    flex-direction: column;
    padding: 0 3px 7px 6px;
}

.info-title {
    height: 26px;
    display: flex;
    justify-content: flex-end;
    align-items: flex-start;
    padding-top: 2px;
}

.info-top {
    height: 126px;
    background-color: #68686a;
    border: 1px solid #333;
}

.info-tools {
    height: 29px;
    display: flex;
    align-items: center;
    justify-content: flex-end;
    gap: 13px;
    padding-right: 10px;
}

.info-body {
    flex: 1;
    background-color: #68686a;
    border-top: 1px solid #333;
    border-right: 1px solid #333;
}

.info-tabs {
    height: 21px;
    background-color: #000;
}

.info-tabs button {
    width: 43px;
    height: 19px;
    padding-right: 10px;
    background-color: #68686a;
}

/* Open file dialog */
.dialog {
    position: absolute;
    top: 0;
    right: 52px;
    width: 569px;
    height: 620px;
    background-color: #494949;
    border: 1px solid #888;
    border-top: 0;
    border-bottom-color: #999;
    outline: 1px solid #000;
}

.dialog-title {
    height: 14px;
    display: flex;
    align-items: flex-start;
    justify-content: space-between;
    padding: 0 5px 0 4px;
    border-bottom: 1px solid #222;
    line-height: 13px;
}

.lookin {
    display: flex;
    align-items: center;
    height: 20px;
    margin: 9px 0 8px 20px;
}

.lookin label {
    width: 80px;
}

.combo {
    display: flex;
    height: 19px;
}

.combo-field {
    flex: 1;
    display: flex;
    align-items: center;
    background-color: #fff;
    border: 2px solid #555;
    border-top-color: #222;
    border-left-color: #222;
    border-bottom-color: #999;
    min-width: 0;
}

.combo select,
.combo input {
    flex: 1;
    min-width: 0;
    height: 15px;
    border: 0;
    padding: 0 1px;
    background-color: transparent;
    color: #000;
    font: 12px/15px "Noto Sans CJK SC", sans-serif;
    appearance: none;
    outline: 0;
}

.combo input {
    font: 10px/15px "Liberation Mono", monospace;
}

.combo-arrow {
    width: 17px;
    background-color: #68686a;
    border: 1px solid #888;
    border-bottom-color: #111;
    border-radius: 0 3px 3px 0;
    display: flex;
    align-items: center;
    justify-content: center;
    padding-top: 3px;
}

.lookin .combo {
    width: 261px;
    height: 21px;
}

.lookin .combo-field svg {
    margin: 0 4px 0 5px;
}

.nav-icons {
    display: flex;
    align-items: center;
    gap: 7px;
    margin-left: 15px;
    padding-top: 2px;
}

.view-arrow {
    color: #222;
    margin-left: -4px;
}

.browser {
    display: flex;
    padding: 0 17px 0 7px;
}

.places {
    width: 89px;
    height: 360px;
    margin-top: -4px;
    background-color: #f3f3f3;
    color: #000;
    display: flex;
    flex-direction: column;
    padding: 10px 1px 0 0;
}

.places a {
    height: 62px;
    display: flex;
    flex-direction: column;
    align-items: center;
    gap: 2px;
}

.places svg {
    height: 28px;
}

.file-list {
    flex: 1;
    min-width: 0;
    margin-left: 4px;
}

.file-main {
    display: flex;
    height: 265px;
}

.file-scroll {
    flex: 1;
    min-width: 0;
    overflow: hidden;
    background-color: #fff;
    color: #000;
}

table {
    width: 100%;
    border-spacing: 0;
    table-layout: fixed;
}

th {
    height: 18px;
    padding: 0 3px;
    background-color: #68686a;
    border-top: 1px solid #999;
    border-bottom: 1px solid #333;
    color: #fff;
    font-weight: normal;
    text-align: left;
}

.name-col {
    width: 305px;
}

.th-inner {
    display: flex;
    align-items: center;
    justify-content: space-between;
}

td {
    height: 21px;
    padding: 0 0 0 7px;
    font-size: 12px;
    line-height: 16px;
    white-space: nowrap;
}

td:first-child {
    padding-left: 9px;
}

.file {
    display: flex;
    align-items: center;
}

.file span {
    flex: 1;
    height: 21px;
    line-height: 21px;
    padding-left: 3px;
    overflow: hidden;
}

.mpg {
    margin: 0 0 0 -2px;
}

.mpg text {
    font: bold 6px "Liberation Sans", sans-serif;
    fill: #fff;
}

.selected td:last-child,
.selected .file span {
    background-color: #3297fd;
    color: #fff;
}

.selected .file span {
    margin-right: 1px;
}

.selected svg {
    background-color: #3297fd;
    opacity: 0.6;
}

.file-main .thumb {
    height: 116px;
    margin: 54px 0 64px;
}

.file-list .hscroll .thumb {
    flex: 0 0 259px;
    margin-right: auto;
}

.name-rows {
    margin-top: 9px;
    display: flex;
    flex-direction: column;
    gap: 6px;
}

.name-row {
    display: flex;
    align-items: center;
    height: 21px;
    padding-left: 1px;
}

.name-row label {
    width: 94px;
}

.name-row .combo {
    flex: 1;
}

.btn {
    width: 88px;
    height: 21px;
    margin: 0 1px 0 19px;
    background-color: #76767a;
    border: 1px solid #8a8a8a;
    border-bottom: 2px solid #222;
    border-radius: 3px;
}

/* Clip properties */
.properties {
    display: flex;
    padding: 11px 32px 0 30px;
}

.preview-col {
    width: 152px;
}

.frame-row {
    display: flex;
    justify-content: space-between;
    align-items: center;
}

.field {
    background-color: #68686a;
    border: 1px solid #333;
    border-bottom-color: #999;
    border-right-color: #888;
    color: #fff;
    font: 11px/16px Roboto, sans-serif;
    padding: 0 2px;
    height: 19px;
}

.frame-row .field {
    width: 75px;
}

.preview {
    height: 101px;
    margin: 7px 1px 0 7px;
    background-color: #000;
    border: 3px double #bbb;
    outline: 1px solid #222;
}

.frame-slider {
    appearance: none;
    display: block;
    width: 139px;
    height: 22px;
    margin: 5px 0 0 12px;
    background: linear-gradient(#000, #000) center / 100% 4px no-repeat;
}

.frame-slider::-webkit-slider-thumb {
    appearance: none;
    width: 11px;
    height: 22px;
    border: 1px solid #777;
    border-radius: 4px;
    background: linear-gradient(#fff 0 5px, #777 5px 13px, #fff 13px) center / 3px 18px no-repeat #888;
}

.check {
    display: flex;
    align-items: center;
    gap: 5px;
    height: 23px;
}

.check input {
    appearance: none;
    width: 13px;
    height: 13px;
    margin: 0;
    border: 1px solid #fff;
}

.disabled {
    color: #999;
}

.disabled input {
    border-color: #999;
}

.preview-col .check {
    margin: 4px 0 0 8px;
}

.clip-col {
    flex: 1;
    margin: -3px 0 0 32px;
}

.clip-col .check {
    margin-left: 1px;
}

.form-row {
    display: flex;
}

.form-row label {
    width: 63px;
    padding-top: 3px;
    white-space: nowrap;
}

.form-row .field {
    flex: 1;
}

.first {
    margin-top: 12px;
}

.comment {
    margin-top: 9px;
}

.comment label {
    padding-top: 5px;
}

.form-row textarea {
    height: 58px;
    resize: none;
}

.color {
    margin-top: 10px;
}

.color label {
    width: 78px;
}

.color-btn {
    width: 145px;
    height: 21px;
    padding: 2px 15px 0 0;
    background-color: #fff;
    color: #000;
    border: 2px solid #888;
    border-bottom-color: #222;
    border-radius: 3px;
}

.resize {
    position: absolute;
    right: 2px;
    bottom: 2px;
}

/* Input method panel */
.ime {
    position: absolute;
    top: 559px;
    right: -5px;
    width: 61px;
    height: 60px;
    padding: 4px 6px;
    display: grid;
    grid-template-columns: 26px 18px;
    align-items: center;
    background: radial-gradient(circle at 70% 40%, #102a78, #020630 70%);
    border: 2px solid #0b2bd0;
    border-radius: 6px;
}
```
